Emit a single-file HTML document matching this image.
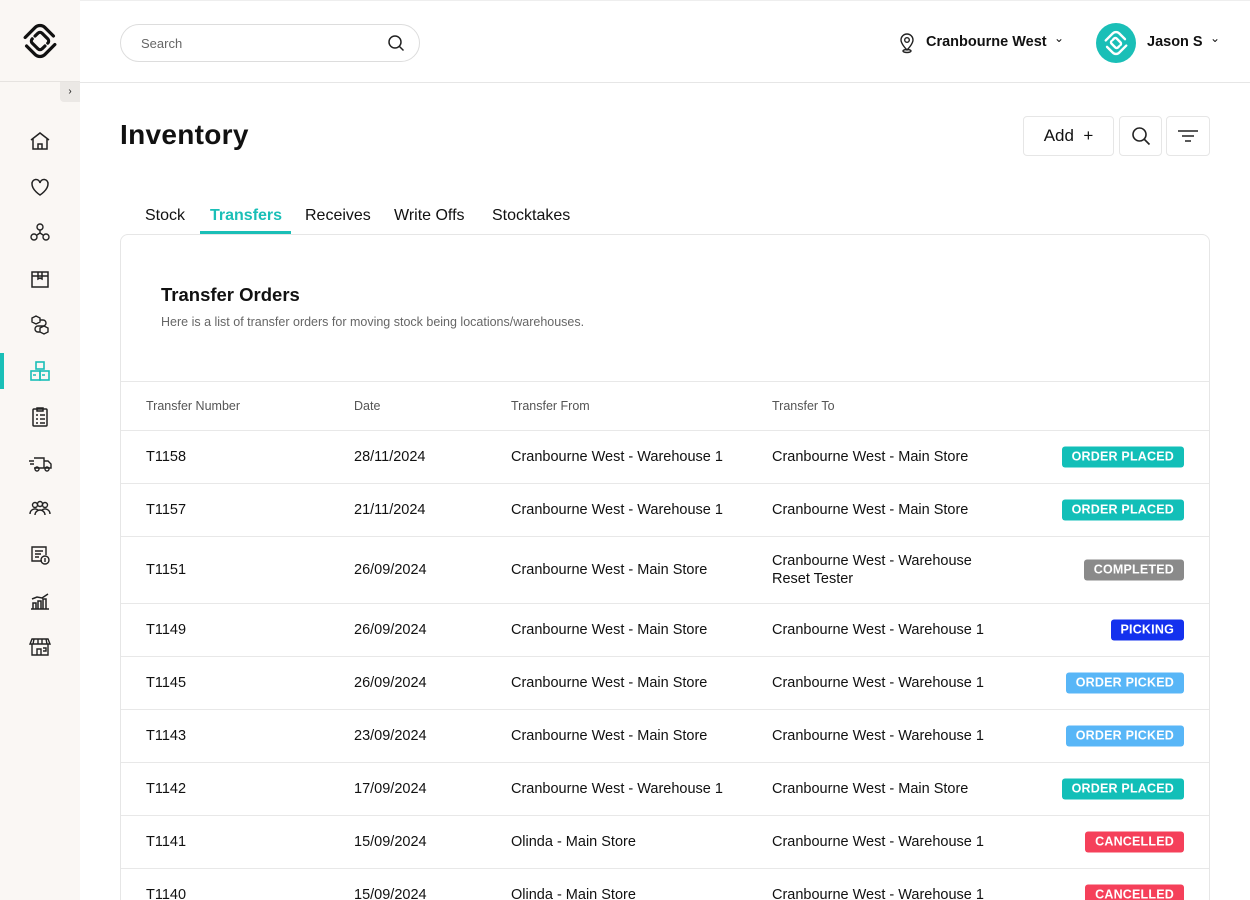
<!DOCTYPE html>
<html style="width:1250px;height:900px;overflow:hidden"><head><meta charset="utf-8"><style>
*{box-sizing:border-box;margin:0;padding:0}
body{width:1250px;height:900px;overflow:hidden;background:#fff;font-family:"Liberation Sans",sans-serif;color:#111;position:relative}
.side{position:absolute;left:0;top:0;width:80px;height:900px;background:#faf7f4}
.side .top{height:82px;border-bottom:1px solid #e6e3e0;display:flex;align-items:center;justify-content:center}
.tog{position:absolute;left:60px;top:82px;width:20px;height:20px;background:#ebe8e5;font-size:10px;text-align:center;line-height:20px;border-bottom-left-radius:4px}
.ic{position:absolute;left:28px;width:24px;height:24px}
.act{position:absolute;left:0;top:353px;width:4px;height:36px;background:#1abfb7}
.hdr{position:absolute;left:80px;top:0;right:0;height:83px;border-bottom:1px solid #e6e6e6;border-top:1px solid #eee}
.search{position:absolute;left:40px;top:23px;width:300px;height:38px;border:1px solid #ddd;border-radius:19px;font-size:13px;color:#666;padding:11px 20px}
.abs{position:absolute}
h1{position:absolute;left:120px;top:119px;font-size:28px;font-weight:bold;letter-spacing:.3px}
.btn{position:absolute;top:116px;height:40px;border:1px solid #e6e6e6;border-radius:4px;background:#fff;display:flex;align-items:center;justify-content:center;font-size:17px}
.tabs span{position:absolute;top:207px;font-size:16px}
.card{position:absolute;left:120px;top:234px;width:1090px;height:700px;border:1px solid #e6e6e6;border-radius:8px}
.row{position:absolute;left:121px;width:1088px;border-top:1px solid #e8e8e8;font-size:14.5px}
.row div{position:absolute;top:50%;transform:translateY(-50%)}
.b{position:absolute;right:25px;top:50%;transform:translateY(-50%);height:21px;line-height:21px;padding:0 10px;border-radius:3px;color:#fff;font-size:12.5px;font-weight:bold;letter-spacing:.2px}
</style></head><body>
<div class="side">
<div class="top"><svg width="44" height="44" viewBox="0 0 44 44" fill="none" stroke="#111" stroke-width="3.2" stroke-linecap="round"><g transform="rotate(45 22 22)"><path d="M9 30V16a7 7 0 0 1 7-7h12"/><path d="M35 14v14a7 7 0 0 1-7 7H16"/><path d="M15 22v-4a3 3 0 0 1 3-3h8a3 3 0 0 1 3 3v0"/><path d="M29 22v4a3 3 0 0 1-3 3h-8a3 3 0 0 1-3-3v0"/></g></svg></div>
<div class="tog">›</div>
<div class="act"></div>
<svg class="ic" style="top:129px" viewBox="0 0 24 24" fill="none" stroke="#222" stroke-width="1.5"><path d="M3 11L12 4l9 7M5 10v10h14V10M10 20v-5h4v5"/></svg>
<svg class="ic" style="top:175px" viewBox="0 0 24 24" fill="none" stroke="#222" stroke-width="1.5"><path d="M12 20s-8-5-8-11a4 4 0 0 1 8-1 4 4 0 0 1 8 1c0 6-8 11-8 11z"/></svg>
<svg class="ic" style="top:221px" viewBox="0 0 24 24" fill="none" stroke="#222" stroke-width="1.4"><circle cx="12" cy="6" r="3"/><circle cx="6" cy="16" r="3"/><circle cx="18" cy="16" r="3"/><path d="M12 9v3M9 14l3-2 3 2"/></svg>
<svg class="ic" style="top:267px" viewBox="0 0 24 24" fill="none" stroke="#222" stroke-width="1.5"><rect x="4" y="5" width="16" height="15"/><path d="M4 9h16M10 5v7l2-1 2 1V5"/></svg>
<svg class="ic" style="top:313px" viewBox="0 0 24 24" fill="none" stroke="#222" stroke-width="1.4"><path d="M4 5l4-2 4 2v4l-4 2-4-2zM12 15l4-2 4 2v4l-4 2-4-2zM12 7h3a3 3 0 0 1 0 6h-5a3 3 0 0 0 0 6h2"/></svg>
<svg class="ic" style="top:359px" viewBox="0 0 24 24" fill="none" stroke="#1abfb7" stroke-width="1.6"><rect x="8" y="3" width="8" height="7"/><rect x="3" y="12" width="9" height="9"/><rect x="12" y="12" width="9" height="9"/><path d="M5 16h3M14 16h3"/></svg>
<svg class="ic" style="top:405px" viewBox="0 0 24 24" fill="none" stroke="#222" stroke-width="1.5"><rect x="5" y="4" width="14" height="17" rx="1"/><path d="M9 3h6v3H9zM8 10h2M12 10h5M8 14h2M12 14h5M8 18h2M12 18h5"/></svg>
<svg class="ic" style="top:451px" viewBox="0 0 24 24" fill="none" stroke="#222" stroke-width="1.4"><path d="M6 7h10v10H6M16 10h4l3 3v4h-7M1 10h5M2 13h4"/><circle cx="9" cy="18" r="2"/><circle cx="19" cy="18" r="2"/></svg>
<svg class="ic" style="top:497px" viewBox="0 0 24 24" fill="none" stroke="#222" stroke-width="1.4"><circle cx="7" cy="8" r="2.5"/><circle cx="12" cy="7" r="2.5"/><circle cx="17" cy="8" r="2.5"/><path d="M2 17a5 5 0 0 1 8-4M22 17a5 5 0 0 0-8-4M7 18a5 5 0 0 1 10 0"/></svg>
<svg class="ic" style="top:543px" viewBox="0 0 24 24" fill="none" stroke="#222" stroke-width="1.4"><path d="M14 18H4V4h14v8M7 8h8M7 11h6M7 14h4"/><circle cx="17" cy="17" r="4"/><path d="M17 15v4"/></svg>
<svg class="ic" style="top:589px" viewBox="0 0 24 24" fill="none" stroke="#222" stroke-width="1.5"><path d="M3 20h18M5 20v-6h3v6M10 20v-8h3v8M15 20v-10h3v10M4 10l5-2 5 1 6-4"/></svg>
<svg class="ic" style="top:635px" viewBox="0 0 24 24" fill="none" stroke="#222" stroke-width="1.4"><path d="M4 4h16l2 5H2zM4 9v11h16V9M9 20v-6h4v6M15 13h3v3h-3M6 4l-1 5M10 4v5M14 4v5M18 4l1 5"/></svg>
</div>
<div class="hdr">
<div class="search">Search<svg style="position:absolute;right:14px;top:9px" width="18" height="18" viewBox="0 0 18 18" fill="none" stroke="#222" stroke-width="1.5"><circle cx="8" cy="8" r="6"/><path d="M12.5 12.5l4 4"/></svg></div>
<svg class="abs" style="left:818px;top:31px" width="18" height="22" viewBox="0 0 18 22" fill="none" stroke="#222" stroke-width="1.4"><path d="M9 18s-6-6-6-10a6 6 0 0 1 12 0c0 4-6 10-6 10z"/><circle cx="9" cy="8" r="2.3"/><ellipse cx="9" cy="19" rx="4" ry="1.5"/></svg>
<div class="abs" style="left:846px;top:33px;font-size:14.5px;font-weight:bold">Cranbourne West</div>
<div class="abs" style="left:974px;top:30px;font-size:12px">⌄</div>
<div class="abs" style="left:1016px;top:22px;width:40px;height:40px;border-radius:50%;background:#1abfb7"><svg width="40" height="40" viewBox="0 0 44 44" fill="none" stroke="#fff" stroke-width="2.6" stroke-linecap="round"><g transform="rotate(45 22 22)"><path d="M12 28V17a5 5 0 0 1 5-5h9"/><path d="M32 16v11a5 5 0 0 1-5 5h-9"/><path d="M17 22v-2a2 2 0 0 1 2-2h6a2 2 0 0 1 2 2"/><path d="M27 22v2a2 2 0 0 1-2 2h-6a2 2 0 0 1-2-2"/></g></svg></div>
<div class="abs" style="left:1067px;top:33px;font-size:14.5px;font-weight:bold">Jason S</div>
<div class="abs" style="left:1130px;top:30px;font-size:12px">⌄</div>
</div>
<h1>Inventory</h1>
<div class="btn" style="left:1023px;width:91px">Add&nbsp;&nbsp;+</div>
<div class="btn" style="left:1119px;width:43px"><svg width="20" height="20" viewBox="0 0 20 20" fill="none" stroke="#222" stroke-width="1.6"><circle cx="8.5" cy="8.5" r="6.5"/><path d="M13.5 13.5l5 5"/></svg></div>
<div class="btn" style="left:1166px;width:44px"><svg width="22" height="14" viewBox="0 0 22 14" stroke="#222" stroke-width="1.6"><path d="M1 2h20M5 7h12M8 12h6"/></svg></div>
<div class="tabs"><span style="left:145px">Stock</span><span style="left:210px;color:#1abfb7;font-weight:bold">Transfers</span><span style="left:305px">Receives</span><span style="left:394px">Write Offs</span><span style="left:492px">Stocktakes</span></div>
<div class="abs" style="left:200px;top:231px;width:91px;height:3px;background:#1abfb7"></div>
<div class="card"></div>
<div class="abs" style="left:161px;top:284px;font-size:18.5px;font-weight:bold">Transfer Orders</div>
<div class="abs" style="left:161px;top:315px;font-size:12.5px;color:#666">Here is a list of transfer orders for moving stock being locations/warehouses.</div>
<div class="row" style="top:381px;height:49px;font-size:12.5px;color:#555"><div style="left:25px">Transfer Number</div><div style="left:233px">Date</div><div style="left:390px">Transfer From</div><div style="left:651px">Transfer To</div></div>
<div class="row" style="top:430px;height:53px"><div style="left:25px">T1158</div><div style="left:233px">28/11/2024</div><div style="left:390px">Cranbourne West - Warehouse 1</div><div style="left:651px">Cranbourne West - Main Store</div><span class="b" style="background:#12bfb8">ORDER PLACED</span></div>
<div class="row" style="top:483px;height:53px"><div style="left:25px">T1157</div><div style="left:233px">21/11/2024</div><div style="left:390px">Cranbourne West - Warehouse 1</div><div style="left:651px">Cranbourne West - Main Store</div><span class="b" style="background:#12bfb8">ORDER PLACED</span></div>
<div class="row" style="top:536px;height:67px"><div style="left:25px">T1151</div><div style="left:233px">26/09/2024</div><div style="left:390px">Cranbourne West - Main Store</div><div style="left:651px;line-height:18px">Cranbourne West - Warehouse<br>Reset Tester</div><span class="b" style="background:#8a8a8a">COMPLETED</span></div>
<div class="row" style="top:603px;height:53px"><div style="left:25px">T1149</div><div style="left:233px">26/09/2024</div><div style="left:390px">Cranbourne West - Main Store</div><div style="left:651px">Cranbourne West - Warehouse 1</div><span class="b" style="background:#1431ee">PICKING</span></div>
<div class="row" style="top:656px;height:53px"><div style="left:25px">T1145</div><div style="left:233px">26/09/2024</div><div style="left:390px">Cranbourne West - Main Store</div><div style="left:651px">Cranbourne West - Warehouse 1</div><span class="b" style="background:#58b6f7">ORDER PICKED</span></div>
<div class="row" style="top:709px;height:53px"><div style="left:25px">T1143</div><div style="left:233px">23/09/2024</div><div style="left:390px">Cranbourne West - Main Store</div><div style="left:651px">Cranbourne West - Warehouse 1</div><span class="b" style="background:#58b6f7">ORDER PICKED</span></div>
<div class="row" style="top:762px;height:53px"><div style="left:25px">T1142</div><div style="left:233px">17/09/2024</div><div style="left:390px">Cranbourne West - Warehouse 1</div><div style="left:651px">Cranbourne West - Main Store</div><span class="b" style="background:#12bfb8">ORDER PLACED</span></div>
<div class="row" style="top:815px;height:53px"><div style="left:25px">T1141</div><div style="left:233px">15/09/2024</div><div style="left:390px">Olinda - Main Store</div><div style="left:651px">Cranbourne West - Warehouse 1</div><span class="b" style="background:#f5405a">CANCELLED</span></div>
<div class="row" style="top:868px;height:53px"><div style="left:25px">T1140</div><div style="left:233px">15/09/2024</div><div style="left:390px">Olinda - Main Store</div><div style="left:651px">Cranbourne West - Warehouse 1</div><span class="b" style="background:#f5405a">CANCELLED</span></div>
</body></html>
